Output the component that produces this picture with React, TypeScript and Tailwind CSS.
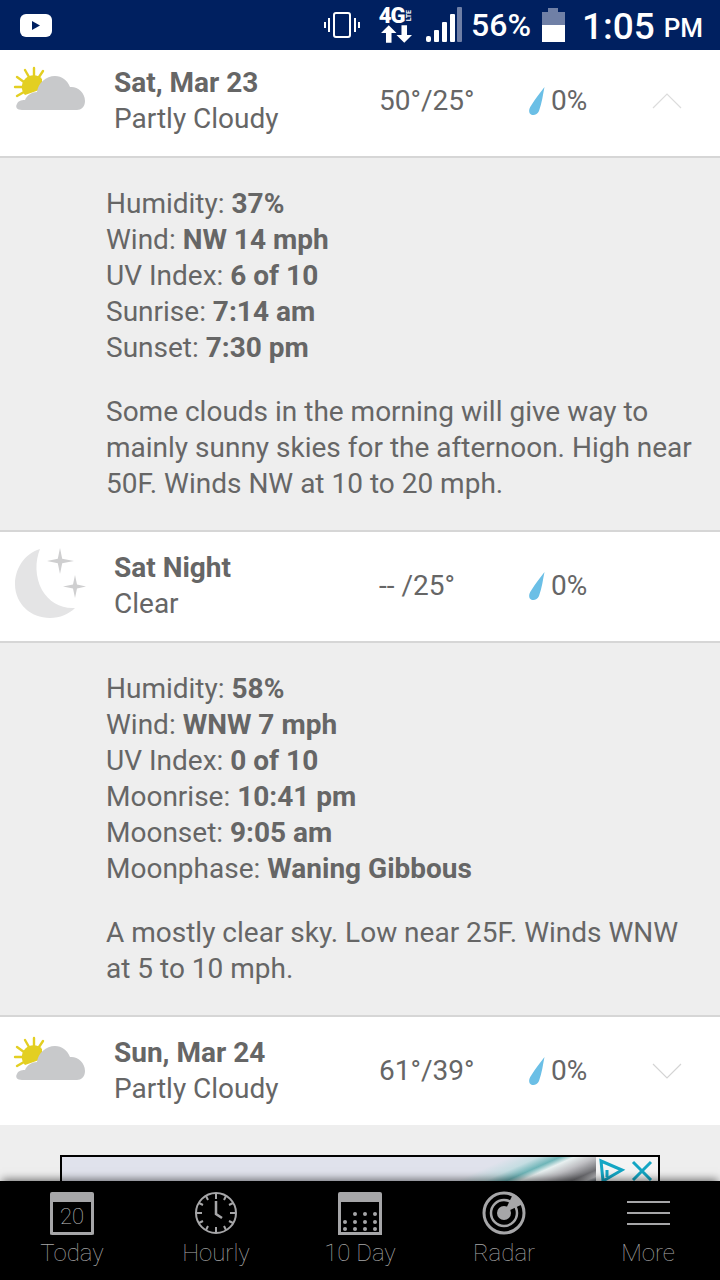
import React from 'react';

const PartlyCloudy = () => (
  <svg width="72" height="44" viewBox="0 0 72 44" className="overflow-visible">
    <g stroke="#e3cf22" strokeWidth="2.4" strokeLinecap="round">
      <path d="M19 1 L19 9" />
      <path d="M10 3 L14 10" />
      <path d="M28 4 L24 10" />
      <path d="M2 10 L9 15" />
      <path d="M0 20 L8 20" />
      <path d="M2 29 L9 25" />
    </g>
    <path d="M10 28 A10.5 10.5 0 0 1 27 12 L27 22 Z" fill="#e3cf22" />
    <path
      d="M7 43 C2 43 0 40 2 37 C3 34 6 33 10 33 C12 28 17 25 22 25 C23 16 31 9 40 9 C47 9 52 13 55 20 C62 19 70 25 70 34 C70 40 66 43 62 43 Z"
      fill="#c8c9cb"
    />
  </svg>
);

const MoonStars = () => (
  <svg width="72" height="71" viewBox="0 0 72 71">
    <path
      d="M25 1 C9 6 0 21 0 36 C0 56 16 70 35 70 C45 70 54 66 60 60 C46 61 34 54 27 42 C20 29 20 13 25 1 Z"
      fill="#e4e4e5"
    />
    <path d="M45 0 L47.2 10.8 L59 13 L47.2 15.2 L45 26 L42.8 15.2 L32 13 L42.8 10.8 Z" fill="#cfcfd0" />
    <path d="M60 27 L62 36.5 L71 38.5 L62 40.5 L60 50 L58 40.5 L48 38.5 L58 36.5 Z" fill="#cfcfd0" />
  </svg>
);

const Drop = () => (
  <svg width="18" height="30" viewBox="0 0 18 30" className="shrink-0">
    <path d="M16.5 1 C15 8 14 17 11 25 C9 30 3 30 1.5 27 C0.5 24 1.5 22 3.5 19 C7 13 12 7 16.5 1 Z" fill="#6bbfe6" />
  </svg>
);

const Chevron = ({ up }: { up?: boolean }) => (
  <svg width="30" height="16" viewBox="0 0 30 16" fill="none" stroke={up ? '#dcdcdc' : '#d4d4d4'} strokeWidth="1.2">
    <path d={up ? 'M1 15 L15 1 L29 15' : 'M1 1 L15 15 L29 1'} />
  </svg>
);

interface RowProps {
  icon: React.ReactNode;
  title: string;
  sub: string;
  temp: string;
  chevron?: 'up' | 'down';
  className: string;
  iconClass: string;
}

const DayRow: React.FC<RowProps> = ({ icon, title, sub, temp, chevron, className, iconClass }) => (
  <div className={`flex items-center bg-white ${className}`}>
    <div className={`w-[114px] shrink-0 self-start pl-[15px] ${iconClass}`}>{icon}</div>
    <div className="w-[246px] shrink-0 leading-[36px]">
      <div className="font-bold">{title}</div>
      <div>{sub}</div>
    </div>
    <div className="w-[168px] shrink-0 pl-[19px] whitespace-nowrap">{temp}</div>
    <div className="flex w-[124px] shrink-0 items-center gap-[5px]">
      <Drop />
      <span>0%</span>
    </div>
    {chevron && <Chevron up={chevron === 'up'} />}
  </div>
);

const Stat = ({ label, value }: { label: string; value: string }) => (
  <div>
    {label}: <span className="font-bold">{value}</span>
  </div>
);

const Details = ({ stats, text, className }: { stats: [string, string][]; text: string; className: string }) => (
  <div className={`border-y-2 border-[#d6d6d6] pl-[106px] pr-6 leading-[36px] ${className}`}>
    {stats.map(([label, value]) => (
      <Stat key={label} label={label} value={value} />
    ))}
    <p className="mt-[28px]">{text}</p>
  </div>
);

const NavItem = ({ icon, label }: { icon: React.ReactNode; label: string }) => (
  <div className="flex w-[144px] flex-col items-center">
    <div className="flex h-[44px] items-center justify-center">{icon}</div>
    <div className="mt-[2px] text-[24px] font-thin leading-[32px] text-[#a8a8a8]">{label}</div>
  </div>
);

const TodayIcon = () => (
  <div className="h-[43px] w-[44px] rounded-[2px] border-[3px] border-t-0 border-[#a6a6a8]">
    <div className="h-[10px] bg-[#a6a6a8]" />
    <div className="text-center text-[22px] font-thin leading-[30px] text-[#c0c0c0]">20</div>
  </div>
);

const ClockIcon = () => (
  <svg width="44" height="44" viewBox="0 0 44 44" fill="none" stroke="#a6a6a8" strokeWidth="2">
    <circle cx="22" cy="22" r="20" />
    <path d="M22 2 V8 M22 36 V42 M2 22 H8 M36 22 H42 M12 5 L14 9 M32 5 L30 9 M5 12 L9 14 M39 12 L35 14 M5 32 L9 30 M39 32 L35 30 M12 39 L14 35 M32 39 L30 35" />
    <path d="M22 10 V23 L28 27" strokeWidth="2.5" />
  </svg>
);

const TenDayIcon = () => (
  <svg width="44" height="43" viewBox="0 0 44 43">
    <path d="M2 0 H42 Q44 0 44 2 V43 H0 V2 Q0 0 2 0 Z" fill="#a6a6a8" />
    <rect x="3" y="10" width="38" height="30" fill="#000" />
    <g fill="#a6a6a8">
      {[22, 30, 37].flatMap((y) =>
        [7, 17, 27, 37].filter((x) => y !== 22 || x > 7).map((x) => <circle key={`${x}-${y}`} cx={x} cy={y} r="2" />)
      )}
    </g>
  </svg>
);

const RadarIcon = () => (
  <svg width="44" height="44" viewBox="0 0 44 44" fill="none" stroke="#a6a6a8">
    <circle cx="22" cy="22" r="20" strokeWidth="3" />
    <circle cx="22" cy="22" r="13" strokeWidth="2.5" />
    <circle cx="22" cy="22" r="7" fill="#a6a6a8" strokeWidth="0" />
    <path d="M22 22 L31 3 A20 20 0 0 1 41 13 Z" fill="#a6a6a8" stroke="none" />
  </svg>
);

const MoreIcon = () => (
  <div className="flex w-[43px] flex-col gap-[9px]">
    <div className="h-[2px] bg-[#a6a6a8]" />
    <div className="h-[2px] bg-[#a6a6a8]" />
    <div className="h-[2px] bg-[#a6a6a8]" />
  </div>
);

const StatusBar = () => (
  <div className="flex h-[50px] shrink-0 items-center bg-[#002060] pl-[20px] text-white">
    <svg width="32" height="23" viewBox="0 0 32 23">
      <rect width="32" height="23" rx="6" fill="#fff" />
      <path d="M12 7 L20 11.5 L12 16 Z" fill="#002060" />
    </svg>
    <svg width="36" height="26" viewBox="0 0 36 26" fill="none" stroke="#fff" strokeWidth="2" className="ml-[272px]">
      <rect x="10" y="1" width="16" height="24" rx="2" />
      <path d="M5 6 V20 M31 6 V20 M1 10 V16 M35 10 V16" />
    </svg>
    <div className="ml-[15px] flex w-[42px] flex-col items-center">
      <div className="flex h-[17px] items-center">
        <span className="text-[22px] font-black leading-[17px] tracking-[-1px]">4G</span>
        <span className="ml-[1px] text-[7px] font-bold leading-[8px] [writing-mode:vertical-rl] rotate-180">LTE</span>
      </div>
      <svg width="31" height="18" viewBox="0 0 28 16" fill="#fff" className="mt-[1px]">
        <path d="M7 0 L14 7 H9.5 V16 H4.5 V7 H0 Z" />
        <path d="M21 16 L28 9 H23.5 V0 H18.5 V9 H14 Z" />
      </svg>
    </div>
    <svg width="36" height="36" viewBox="0 0 36 36" className="ml-[9px]">
      <rect x="0" y="29" width="5" height="6" rx="2" fill="#fff" />
      <rect x="8" y="23" width="5" height="12" rx="1" fill="#fff" />
      <rect x="16" y="15" width="5" height="20" rx="1" fill="#fff" />
      <rect x="24" y="7" width="5" height="28" rx="1" fill="#fff" />
      <rect x="31" y="0" width="5" height="35" rx="1" fill="#6f7fa6" />
    </svg>
    <span className="ml-[9px] text-[32px] font-medium leading-none">56%</span>
    <div className="ml-[11px] flex w-[23px] flex-col items-center">
      <div className="h-[4px] w-[10px] bg-[#7080a6]" />
      <div className="h-[13px] w-full bg-[#7080a6]" />
      <div className="h-[17px] w-full bg-white" />
    </div>
    <span className="ml-[17px] mt-[2px] text-[37px] font-medium leading-none">1:05</span>
    <span className="ml-[9px] mt-[6px] text-[26px] font-medium leading-none">PM</span>
  </div>
);

export default function App() {
  return (
    <div className="relative flex h-[1280px] w-[720px] flex-col overflow-hidden bg-[#eeeeee] font-['Roboto',sans-serif] text-[28px] text-[#666666]">
      <StatusBar />

      <DayRow
        icon={<PartlyCloudy />}
        iconClass="pt-[17px]"
        title="Sat, Mar 23"
        sub="Partly Cloudy"
        temp="50°/25°"
        chevron="up"
        className="h-[106px] pb-[4px]"
      />
      <Details
        className="h-[376px] pt-[28px]"
        stats={[
          ['Humidity', '37%'],
          ['Wind', 'NW 14 mph'],
          ['UV Index', '6 of 10'],
          ['Sunrise', '7:14 am'],
          ['Sunset', '7:30 pm'],
        ]}
        text="Some clouds in the morning will give way to mainly sunny skies for the afternoon. High near 50F. Winds NW at 10 to 20 mph."
      />
      <DayRow
        icon={<MoonStars />}
        iconClass="pt-[16px]"
        title="Sat Night"
        sub="Clear"
        temp="-- /25°"
        className="h-[109px] pb-[2px]"
      />
      <Details
        className="h-[376px] pt-[28px]"
        stats={[
          ['Humidity', '58%'],
          ['Wind', 'WNW 7 mph'],
          ['UV Index', '0 of 10'],
          ['Moonrise', '10:41 pm'],
          ['Moonset', '9:05 am'],
          ['Moonphase', 'Waning Gibbous'],
        ]}
        text="A mostly clear sky. Low near 25F. Winds WNW at 5 to 10 mph."
      />
      <DayRow
        icon={<PartlyCloudy />}
        iconClass="pt-[20px]"
        title="Sun, Mar 24"
        sub="Partly Cloudy"
        temp="61°/39°"
        chevron="down"
        className="h-[108px]"
      />

      <div className="flex flex-1 justify-center overflow-hidden pt-[30px]">
        <div className="flex h-[60px] w-[600px] justify-end border-2 border-black bg-[linear-gradient(156deg,#e0e2ec_0%,#e0e2ec_62%,#c5dde2_66%,#6fb5b8_69%,#e8f0f0_71%,#c0c0c4_74%,#6e6e72_78%,#b5b5b8_80%,#2d3a48_82.5%,#3a4450_85%,#e8e8ea_87%)]">
          <div className="flex h-full w-[62px] gap-[2px] bg-[#f4f4f4]">
            <svg width="30" height="26" viewBox="0 0 30 26" fill="none" stroke="#14a6c4" strokeWidth="3">
              <path d="M5 4 L26 13 L7 24 Z" />
              <path d="M11 13 V20" />
            </svg>
            <svg width="28" height="26" viewBox="0 0 28 26" fill="none" stroke="#14a6c4" strokeWidth="3">
              <path d="M5 5 L23 23 M23 5 L5 23" />
            </svg>
          </div>
        </div>
      </div>

      <div className="flex h-[99px] shrink-0 justify-center bg-black pt-[10px] shadow-[0_-4px_8px_-2px_rgba(0,0,0,0.5)]">
        <NavItem icon={<TodayIcon />} label="Today" />
        <NavItem icon={<ClockIcon />} label="Hourly" />
        <NavItem icon={<TenDayIcon />} label="10 Day" />
        <NavItem icon={<RadarIcon />} label="Radar" />
        <NavItem icon={<MoreIcon />} label="More" />
      </div>
    </div>
  );
}
